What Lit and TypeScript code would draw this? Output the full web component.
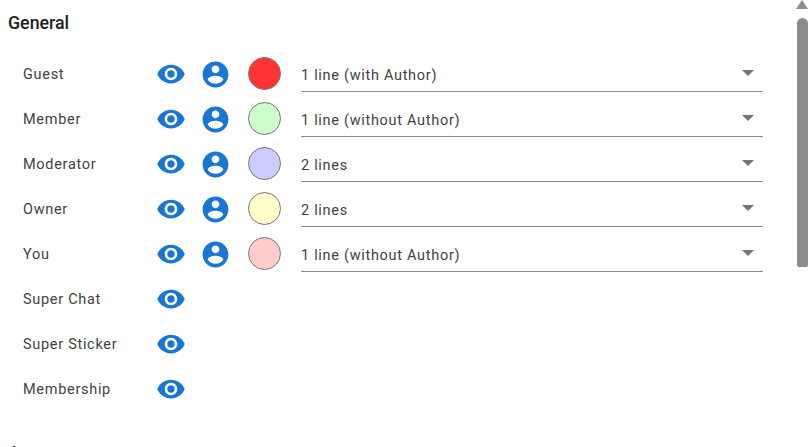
import { LitElement, html, css } from "lit";
import { customElement } from "lit/decorators.js";

const eye = html`<svg class="icon eye" viewBox="0 0 24 24"><path d="M12 4.5C7 4.5 2.73 7.61 1 12c1.73 4.39 6 7.5 11 7.5s9.27-3.11 11-7.5c-1.73-4.39-6-7.5-11-7.5zM12 17c-2.76 0-5-2.24-5-5s2.24-5 5-5 5 2.24 5 5-2.24 5-5 5zm0-8c-1.66 0-3 1.34-3 3s1.34 3 3 3 3-1.34 3-3-1.34-3-3-3z"/></svg>`;
const person = html`<svg class="icon person" viewBox="0 0 24 24"><path d="M12 2C6.48 2 2 6.48 2 12s4.48 10 10 10 10-4.48 10-10S17.52 2 12 2zm0 3c1.66 0 3 1.34 3 3s-1.34 3-3 3-3-1.34-3-3 1.34-3 3-3zm0 14.2c-2.5 0-4.71-1.28-6-3.22.03-1.99 4-3.08 6-3.08 1.99 0 5.97 1.09 6 3.08-1.29 1.94-3.5 3.22-6 3.22z"/></svg>`;

interface Row { name: string; color?: string; value?: string }
const rows: Row[] = [
  { name: "Guest", color: "#ff3333", value: "1 line (with Author)" },
  { name: "Member", color: "#ccffcc", value: "1 line (without Author)" },
  { name: "Moderator", color: "#ccccff", value: "2 lines" },
  { name: "Owner", color: "#ffffcc", value: "2 lines" },
  { name: "You", color: "#ffcccc", value: "1 line (without Author)" },
  { name: "Super Chat" },
  { name: "Super Sticker" },
  { name: "Membership" },
];

@customElement("app-root")
export class AppRoot extends LitElement {
  static styles = css`
    :host { display: flex; width: 811px; height: 447px; overflow: hidden; background: #fff; font-family: Roboto, "Liberation Sans", sans-serif; color: #424242; }
    .content { flex: 1; min-width: 0; height: 447px; overflow: hidden; padding: 14px 0 0 8px; box-sizing: border-box; }
    h2 { margin: 0; font-size: 17.8px; line-height: 18px; font-weight: 500; color: #212121; height: 37px; }
    .h2b { margin-top: 33px; }
    .row { display: flex; align-items: center; height: 45px; padding-left: 15px; }
    .name { width: 133px; font-size: 14.5px; letter-spacing: 0.7px; padding-top: 2px; }
    .icon { fill: #1976d2; display: block; flex: none; }
    .eye { width: 30px; height: 30px; }
    .person { width: 31px; height: 31px; margin-left: 14px; margin-top: 1px; }
    .swatch { width: 33px; height: 33px; border-radius: 50%; box-sizing: border-box; border: 1px solid #757575; margin-left: 17px; flex: none; }
    .select { display: flex; align-items: center; justify-content: space-between; box-sizing: border-box; width: 462px; height: 36px; margin-left: 20px; padding: 4px 9px 0 0; border-bottom: 1px solid #8a8a8a; font-size: 14.5px; letter-spacing: 0.7px; }
    .arrow { width: 0; height: 0; border-left: 6.5px solid transparent; border-right: 6.5px solid transparent; border-top: 6.5px solid #757575; margin-top: -4px; }
    .scroll { width: 16px; flex: none; position: relative; }
    .up { width: 0; height: 0; position: absolute; left: 1px; top: 0; border-left: 6px solid transparent; border-right: 6px solid transparent; border-bottom: 9px solid #8c8c8c; }
    .thumb { position: absolute; left: 2px; top: 18px; width: 11px; height: 249px; background: #8c8c8c; border-radius: 5.5px 5.5px 2px 2px; }
  `;
  render() {
    return html`
      <div class="content">
        <h2>General</h2>
        ${rows.map((r) => html`
          <div class="row">
            <div class="name">${r.name}</div>
            ${eye}
            ${r.color ? html`${person}<div class="swatch" style="background:${r.color}"></div>
              <div class="select"><span>${r.value}</span><i class="arrow"></i></div>` : ""}
          </div>`)}
        <h2 class="h2b">Appearance</h2>
      </div>
      <div class="scroll"><div class="up"></div><div class="thumb"></div></div>
    `;
  }
}
